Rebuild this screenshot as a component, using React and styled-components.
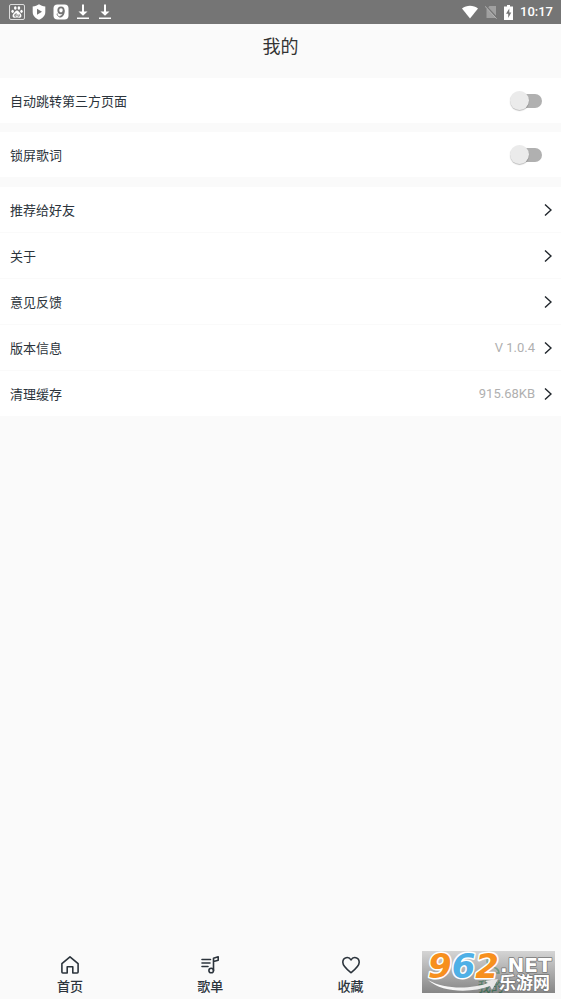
import React, { useState } from "react";
import styled, { createGlobalStyle } from "styled-components";

const GlobalStyle = createGlobalStyle`
  * {
    box-sizing: border-box;
  }

  body {
    margin: 0;
    background: #fafafa;
    color: #2c343c;
    font-family: Roboto, "Noto Sans CJK SC", sans-serif;
    font-size: 13px;
  }
`

const Page = styled.div`
  min-height: 100vh;
  display: flex;
  flex-direction: column;
`

const StatusBar = styled.div`
  height: 24px;
  padding: 0 8px 0 9px;
  display: flex;
  align-items: center;
  justify-content: space-between;
  background: #757575;
  color: #fff;
`

const StatusGroup = styled.div`
  display: flex;
  align-items: center;
  gap: ${props => props.$gap}px;

  svg {
    display: block;
  }
`

const Clock = styled.span`
  font-size: 13px;
  font-weight: 500;
  line-height: 24px;
`

const Header = styled.header`
  height: 54px;
  padding-bottom: 8px;
  display: flex;
  align-items: center;
  justify-content: center;
`

const Title = styled.h1`
  margin: 0;
  font-size: 18px;
  font-weight: 400;
  line-height: 24px;
  color: #333;
`

const Settings = styled.main`
  flex: 1;
  display: flex;
  flex-direction: column;
  gap: 9px;
`

const Group = styled.section`
  padding-top: 1px;
  display: flex;
  flex-direction: column;
  gap: 1px;
`

const SwitchRow = styled.label`
  height: 45px;
  padding: 0 19px 0 10px;
  display: flex;
  align-items: center;
  justify-content: space-between;
  background: #fff;
`

const Switch = styled.input`
  appearance: none;
  position: relative;
  width: 32px;
  height: 20px;
  margin: 0;
  display: flex;
  align-items: center;

  &::before {
    content: "";
    width: 30px;
    height: 14px;
    margin-left: 2px;
    border-radius: 7px;
    background: ${props => props.checked ? '#8fcfb2' : '#b0b0b0'};
  }

  &::after {
    content: "";
    position: absolute;
    left: ${props => props.checked ? 13 : 0}px;
    width: 19px;
    height: 19px;
    border-radius: 50%;
    background: ${props => props.checked ? '#2fa36f' : '#ebebeb'};
    box-shadow: 0 1px 1px rgba(0, 0, 0, 0.25);
  }
`

const LinkRow = styled.button`
  height: 45px;
  padding: 0 9px 0 10px;
  border: 0;
  display: flex;
  align-items: center;
  background: #fff;
  color: inherit;
  font: inherit;
  text-align: left;
`

const RowLabel = styled.span`
  flex: 1;
`

const RowValue = styled.span`
  margin-right: 9px;
  color: #b0b0b0;
`

const TabBar = styled.nav`
  position: sticky;
  bottom: 0;
  height: 48px;
  display: grid;
  grid-template-columns: repeat(4, 1fr);
  background: #fafafa;
`

const Tab = styled.a`
  padding-top: 4px;
  display: flex;
  flex-direction: column;
  align-items: center;
  gap: 3px;
  color: ${props => props.$active ? '#0a9a55' : '#2c343c'};
  font-weight: 500;
  line-height: 18px;
  text-decoration: none;
`

const Badge = styled.div`
  position: absolute;
  right: 6px;
  bottom: 6px;
  background: linear-gradient(rgba(200, 200, 200, 0.75), rgba(85, 85, 85, 0.7));

  svg {
    display: block;
  }
`

const PawIcon = () => (
  <svg width="16" height="16" viewBox="0 0 16 16" fill="#fff">
    <rect x="0.5" y="0.5" width="15" height="15" rx="1.5" fill="none" stroke="#ddd" />
    <ellipse cx="6.3" cy="4" rx="1.3" ry="1.8" />
    <ellipse cx="9.9" cy="4" rx="1.3" ry="1.8" />
    <ellipse cx="3.6" cy="7.3" rx="1.2" ry="1.6" />
    <ellipse cx="12.5" cy="7.3" rx="1.2" ry="1.6" />
    <path d="M8 6.5c1.5 0 2 1.5 3.2 2.7 2.2 2.2 1.2 4.8-1 4.5-1.5-.2-2.9-.2-4.4 0-2.2.3-3.2-2.3-1-4.500C6 8 6.5 6.5 8 6.5z" />
    <path d="M7.1 9v3.2H5.7v-1.6h1.4M8.8 10.3v1.9h1.5v-1.9" fill="none" stroke="#757575" strokeWidth="0.8" />
  </svg>
)

const ShieldIcon = () => (
  <svg width="16" height="16" viewBox="0 0 16 16" fill="#fff">
    <path d="M8 .3c1.7 1.3 4 2 6.3 2.1V8c0 4-2.9 6.3-6.3 7.7C4.6 14.3 1.7 12 1.7 8V2.4C4 2.3 6.3 1.6 8 .3z" />
    <path d="M6 4.8v6l5-3z" fill="#757575" />
  </svg>
)

const NineIcon = () => (
  <svg width="16" height="16" viewBox="0 0 16 16" fill="none" stroke="#757575" strokeWidth="1.8">
    <rect x="0.5" y="0.5" width="15" height="15" rx="4" fill="#fff" stroke="none" />
    <ellipse cx="8" cy="6.3" rx="2.7" ry="3" />
    <path d="M10.700 6.3c.3 3.200-1.200 6-4.200 6.500" />
    <path d="M4.300 9.500c-.5 1.500.5 2.700 2.200 3.300" strokeWidth="1" />
  </svg>
)

const DownloadIcon = () => (
  <svg width="16" height="16" viewBox="0 0 16 16" fill="#fff">
    <path d="M7 .5h2v7h3.5L8 11.8 3.5 7.5H7zM2 13.5h12V15H2z" />
  </svg>
)

const WifiIcon = () => (
  <svg width="16" height="14" viewBox="0 0 16 14" fill="#fff">
    <path d="M0 3.5C4.5-.3 11.5-.3 16 3.5L8 13.5z" />
  </svg>
)

const NoSimIcon = () => (
  <svg width="12" height="14" viewBox="0 0 12 14">
    <path d="M4.5 1H11v12H1.5V4z" fill="#a0a0a0" />
    <path d="M.8.7l11 12" stroke="#757575" strokeWidth="1.5" />
    <path d="M0 1.2l11.5 12.5" stroke="#b5b5b5" />
  </svg>
)

const BatteryIcon = () => (
  <svg width="9" height="15" viewBox="0 0 9 15">
    <path d="M3 0h3v1.5h3V15H0V1.5h3z" fill="#fff" />
    <path d="M5.3 3.5L2 8.7h2.2V13L7.3 7.5H5.3z" fill="#757575" />
  </svg>
)

const Chevron = () => (
  <svg width="8" height="12" viewBox="0 0 8 12" fill="none" stroke="#20262c" strokeWidth="1.4">
    <path d="M1 .5L7 6 1 11.5" />
  </svg>
)

const HomeIcon = () => (
  <svg width="20" height="20" viewBox="0 0 20 20" fill="none" stroke="currentColor" strokeWidth="1.6" strokeLinejoin="round">
    <path d="M10 1.8L1.9 8.7v8.4c0 .6.3.9.9.9h4.4v-6.300h5.6V18h4.400c.6 0 .9-.3.9-.9V8.7z" />
  </svg>
)

const PlaylistIcon = () => (
  <svg width="20" height="20" viewBox="0 0 20 20" fill="none" stroke="currentColor" strokeWidth="1.6" strokeLinecap="round" strokeLinejoin="round">
    <path d="M2 4.5h8.5M2 8h8M2 11.5h6" />
    <circle cx="11.2" cy="15.5" r="2.3" />
    <path d="M13.5 15.5V3.2l4.7-1.4v3.4l-4.7 1.4" />
  </svg>
)

const HeartIcon = () => (
  <svg width="20" height="20" viewBox="0 0 20 20" fill="none" stroke="currentColor" strokeWidth="1.6" strokeLinejoin="round">
    <path d="M10 17.7C6 14.5 1.8 11.3 1.8 7.3c0-5 6-6.5 8.2-2.3 2.200-4.200 8.200-2.700 8.200 2.300 0 4-4.200 7.200-8.200 10.400z" />
  </svg>
)

const UserIcon = () => (
  <svg width="20" height="20" viewBox="0 0 20 20" fill="none" stroke="currentColor" strokeWidth="1.6">
    <circle cx="10" cy="6" r="4" />
    <path d="M2 18c0-8 16-8 16 0z" />
  </svg>
)

const SiteLogo = () => (
  <svg width="133" height="42" viewBox="0 0 133 42">
    <defs>
      <linearGradient id="swoosh" x1="0" x2="1">
        <stop offset="0" stopColor="#fff" />
        <stop offset="1" stopColor="#e4e4e4" />
      </linearGradient>
    </defs>
    <path d="M6 29c17 10 44 9 60 3l-3-2 13-2-6 11-2-4C50 42 20 42 6 29z" fill="url(#swoosh)" />
    <text x="6" y="27" fontFamily="DejaVu Sans" fontWeight="700" fontStyle="italic" fontSize="34" stroke="#fff" strokeWidth="3" strokeLinejoin="round" paintOrder="stroke">
      <tspan fill="#f7901e">9</tspan>
      <tspan fill="#4fb0e6">6</tspan>
      <tspan fill="#f7901e">2</tspan>
    </text>
    <g fill="#fff" stroke="#777" strokeWidth="1.5" strokeLinejoin="round" paintOrder="stroke">
      <text x="78" y="21" fontFamily="DejaVu Sans" fontWeight="700" fontSize="20">.NET</text>
      <text x="77" y="38" fontFamily="Noto Sans CJK SC" fontWeight="700" fontSize="17">乐游网</text>
    </g>
  </svg>
)

const links = [
  { label: '推荐给好友' },
  { label: '关于' },
  { label: '意见反馈' },
  { label: '版本信息', value: 'V 1.0.4' },
  { label: '清理缓存', value: '915.68KB' },
]

const tabs = [
  { id: 'home', label: '首页', Icon: HomeIcon },
  { id: 'playlists', label: '歌单', Icon: PlaylistIcon },
  { id: 'favorites', label: '收藏', Icon: HeartIcon },
  { id: 'mine', label: '我的', Icon: UserIcon, active: true },
]

const App = () => {
  const [autoJump, setAutoJump] = useState(false)
  const [lockLyrics, setLockLyrics] = useState(false)

  return (
    <Page>
      <GlobalStyle />
      <StatusBar>
        <StatusGroup $gap={6}>
          <PawIcon />
          <ShieldIcon />
          <NineIcon />
          <DownloadIcon />
          <DownloadIcon />
        </StatusGroup>
        <StatusGroup $gap={7}>
          <WifiIcon />
          <NoSimIcon />
          <BatteryIcon />
          <Clock>10:17</Clock>
        </StatusGroup>
      </StatusBar>
      <Header>
        <Title>我的</Title>
      </Header>
      <Settings>
        <SwitchRow>
          自动跳转第三方页面
          <Switch type="checkbox" checked={autoJump} onChange={e => setAutoJump(e.target.checked)} />
        </SwitchRow>
        <SwitchRow>
          锁屏歌词
          <Switch type="checkbox" checked={lockLyrics} onChange={e => setLockLyrics(e.target.checked)} />
        </SwitchRow>
        <Group>
          {links.map(({ label, value }) => (
            <LinkRow key={label} type="button">
              <RowLabel>{label}</RowLabel>
              {value && <RowValue>{value}</RowValue>}
              <Chevron />
            </LinkRow>
          ))}
        </Group>
      </Settings>
      <TabBar>
        {tabs.map(({ id, label, Icon, active }) => (
          <Tab key={id} href={`#${id}`} $active={active}>
            <Icon />
            {label}
          </Tab>
        ))}
        <Badge>
          <SiteLogo />
        </Badge>
      </TabBar>
    </Page>
  )
}

export default App
